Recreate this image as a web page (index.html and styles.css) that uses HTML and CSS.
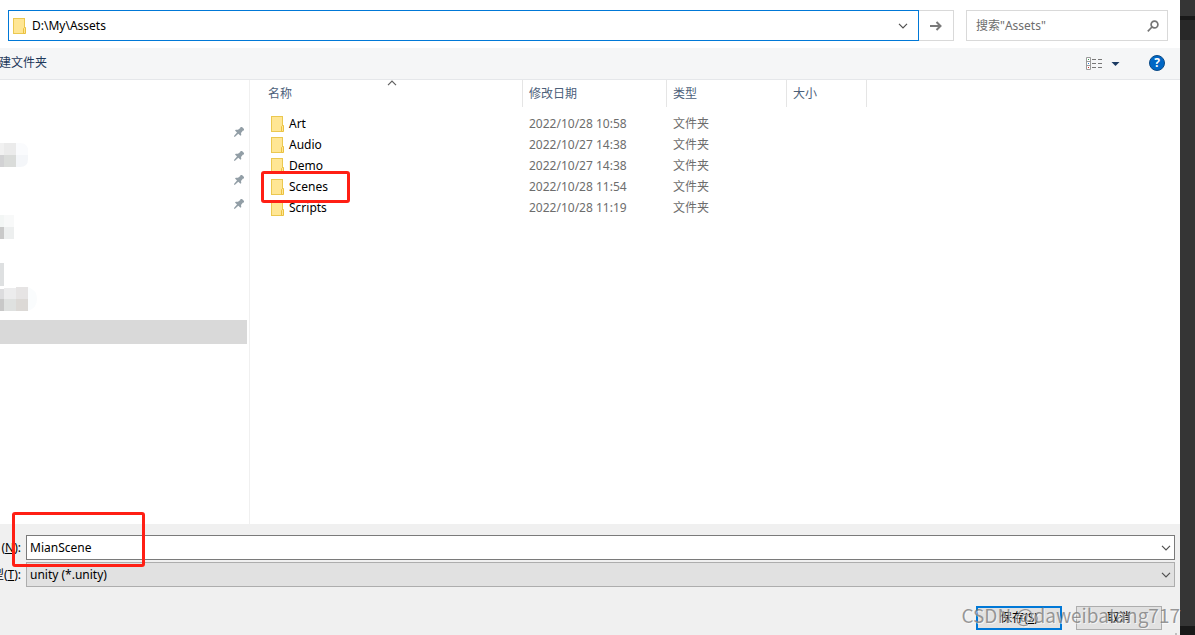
FILE: index.html
```html
<!DOCTYPE html>
<html lang="zh-CN">
<head>
<meta charset="utf-8">
<meta name="viewport" content="width=device-width, initial-scale=1">
<title>Assets</title>
<link rel="stylesheet" href="styles.css">
</head>
<body>
<svg class="defs" aria-hidden="true">
  <symbol id="folder" viewBox="0 0 13 16">
    <rect x="0.5" y="0.5" width="11" height="15" fill="#ffe694" stroke="#ebc850"/>
    <path d="M10.500 15.500v-5l1-1h1v6z" fill="#ffe694" stroke="#ebc13f"/>
  </symbol>
  <symbol id="pin" viewBox="0 0 10 10">
    <path d="M6.500 0h1.500l2 2v1.500H9L7 6l.3 2-.8.8L4.300 6.700 1 9.800H0V9l3-3.500L1 3.500 1.800 2.800H4L6.300 1z" fill="#929ea6"/>
  </symbol>
  <symbol id="chevron" viewBox="0 0 10 6">
    <path d="M1 .8l4 4 4-4" fill="none" stroke="#505050" stroke-width="1.200"/>
  </symbol>
</svg>
<div class="screen">
  <main class="dialog">
    <header class="address-bar">
      <div class="path">
        <svg class="folder"><use href="#folder"/></svg>
        <input class="path-input" type="text" value="D:\My\Assets" aria-label="地址">
        <button class="drop" type="button" aria-label="历史记录"><svg class="chevron"><use href="#chevron"/></svg></button>
      </div>
      <button class="go" type="button" aria-label="转到">
        <svg width="12" height="10" viewBox="0 0 12 10"><path d="M0 5h10.500M6.500 1l4 4-4 4" fill="none" stroke="#7a7a7a" stroke-width="2"/></svg>
      </button>
      <div class="search">
        <input class="search-input" type="text" placeholder='搜索"Assets"' aria-label="搜索">
        <svg width="12" height="12" viewBox="0 0 12 12"><circle cx="7.500" cy="4.500" r="3.400" fill="none" stroke="#757575" stroke-width="1.700"/><path d="M5 7L.8 11.300" stroke="#757575" stroke-width="1.700"/></svg>
      </div>
    </header>

    <div class="toolbar">
      <button class="new-folder" type="button">建文件夹</button>
      <div class="tools">
        <button class="view" type="button" aria-label="更改视图">
          <svg width="34" height="13" viewBox="0 0 34 13">
            <path d="M.5.5h4v12h-4zM.5 4.500h4M.5 8.500h4" fill="#fff" stroke="#9a9a9a"/>
            <path d="M2 2h1v1H2z" fill="#3a9a50"/><path d="M2 6h1v1H2z" fill="#2a7bd8"/><path d="M2 10h1v1H2z" fill="#d02a2a"/>
            <path d="M6 2.500h4M12 2.500h4M6 6.500h4M12 6.500h4M6 10.500h4M12 10.500h4" stroke="#777"/>
            <path d="M25.500 5h8l-4 4z" fill="#1b3a63"/>
          </svg>
        </button>
        <button class="help" type="button" aria-label="帮助">?</button>
      </div>
    </div>

    <div class="content">
      <nav class="sidebar" aria-label="导航">
        <ul class="places">
          <li class="place pinned"><svg class="pin"><use href="#pin"/></svg></li>
          <li class="place pinned">
            <svg class="mosaic" viewBox="0 0 40 24"><path d="M16 0h4q8 0 8 8v4H16z" fill="#fafbfd"/><path d="M16 12h12v4q0 8-8 8h-4z" fill="#f4f6f9"/><path d="M0 0h4v12H0z" fill="#f1f1f1"/><path d="M4 0h12v12H4z" fill="#ebebeb"/><path d="M0 12h4v12H0z" fill="#d2d2d4"/><path d="M4 12h12v12H4z" fill="#dadcda"/></svg>
            <svg class="pin"><use href="#pin"/></svg>
          </li>
          <li class="place pinned"><svg class="pin"><use href="#pin"/></svg></li>
          <li class="place pinned"><svg class="pin"><use href="#pin"/></svg></li>
          <li class="place"><svg class="mosaic" viewBox="0 0 40 24"><path d="M0 0h4v12H0z" fill="#f3f6f5"/><path d="M4 0h10v12H4z" fill="#f8f9f9"/><path d="M0 12h4v12H0z" fill="#c9c9c9"/><path d="M4 12h10v12H4z" fill="#edefef"/></svg></li>
          <li class="place"></li>
          <li class="place"><svg class="mosaic" viewBox="0 0 40 24"><path d="M0 0h4v23H0z" fill="#dee0e1"/></svg></li>
          <li class="place"><svg class="mosaic" viewBox="0 0 40 24"><path d="M28 0q9 3 9 12t-9 12z" fill="#fafcfd"/><path d="M0 2h4v10H0z" fill="#dcdcde"/><path d="M4 1h12v11H4z" fill="#ececed"/><path d="M16 0h12v12H16z" fill="#e6e4e4"/><path d="M0 12h4v12H0z" fill="#c8c8c8"/><path d="M4 12h12v12H4z" fill="#dfe1e0"/><path d="M16 12h12v12H16z" fill="#dcd9d6"/></svg></li>
          <li class="place selected"></li>
        </ul>
      </nav>

      <section class="files">
        <svg class="sort" viewBox="0 0 10 6"><path d="M1 5.200l4-4 4 4" fill="none" stroke="#606060" stroke-width="1.200"/></svg>
        <table class="file-table">
          <colgroup><col class="col-name"><col class="col-date"><col class="col-type"><col class="col-size"></colgroup>
          <thead>
            <tr><th scope="col">名称</th><th scope="col">修改日期</th><th scope="col">类型</th><th scope="col">大小</th></tr>
          </thead>
          <tbody>
            <tr><td><span class="file"><svg class="folder"><use href="#folder"/></svg>Art</span></td><td>2022/10/28 10:58</td><td>文件夹</td><td></td></tr>
            <tr><td><span class="file"><svg class="folder"><use href="#folder"/></svg>Audio</span></td><td>2022/10/27 14:38</td><td>文件夹</td><td></td></tr>
            <tr><td><span class="file"><svg class="folder"><use href="#folder"/></svg>Demo</span></td><td>2022/10/27 14:38</td><td>文件夹</td><td></td></tr>
            <tr><td><span class="file"><svg class="folder"><use href="#folder"/></svg>Scenes<i class="mark mark-file"></i></span></td><td>2022/10/28 11:54</td><td>文件夹</td><td></td></tr>
            <tr><td><span class="file"><svg class="folder"><use href="#folder"/></svg>Scripts</span></td><td>2022/10/28 11:19</td><td>文件夹</td><td></td></tr>
          </tbody>
        </table>
      </section>
    </div>

    <footer class="footer">
      <div class="field">
        <label class="field-label" for="filename">(<u>N</u>):</label>
        <div class="combo">
          <input class="combo-input" id="filename" type="text" value="MianScene">
          <button class="drop" type="button" aria-label="文件名列表"><svg class="chevron"><use href="#chevron"/></svg></button>
        </div>
        <i class="mark mark-name"></i>
      </div>
      <div class="field">
        <label class="field-label" for="filetype">型(<u>T</u>):</label>
        <div class="combo combo-type">
          <select class="combo-select" id="filetype"><option>unity (*.unity)</option></select>
          <svg class="chevron select-chevron"><use href="#chevron"/></svg>
        </div>
      </div>
      <div class="actions">
        <button class="btn btn-default" type="button">保存(<u>S</u>)</button>
        <button class="btn" type="button">取消</button>
      </div>
      <span class="watermark">CSDN @daweibatang717</span>
      <i class="grip"></i>
    </footer>
  </main>
  <aside class="backdrop">
    <div class="backdrop-line"></div>
    <div class="backdrop-tab"></div>
    <div class="backdrop-end"></div>
  </aside>
</div>
</body>
</html>
```
FILE: styles.css
```css
* { box-sizing: border-box; }

body {
  margin: 0;
  background: #fff;
  color: #000;
  font: 12px/16px "Noto Sans", "Noto Sans CJK SC", sans-serif;
}

button, input, select {
  margin: 0;
  padding: 0;
  border: 0;
  border-radius: 0;
  background: none;
  color: inherit;
  font: inherit;
}

input { min-width: 0; outline: 0; }
svg { display: block; flex: none; }
.defs { position: absolute; width: 0; height: 0; }

.screen { display: flex; min-height: 100vh; }
.dialog { display: flex; flex: 1; flex-direction: column; min-width: 0; }

.folder { width: 13px; height: 16px; }
.chevron { width: 10px; height: 6px; }
.drop { display: flex; align-items: center; justify-content: center; width: 18px; }

/* Address bar */
.address-bar { display: flex; height: 48px; padding: 10px 12px 7px 8px; }
.path {
  display: flex;
  flex: 1;
  align-items: center;
  gap: 6px;
  padding: 0 6px 0 4px;
  border: 1px solid #0078d7;
}
.path-input { flex: 1; }
.go {
  display: flex;
  align-items: center;
  justify-content: center;
  width: 35px;
  border: 1px solid #d9d9d9;
  border-left: 0;
}
.search {
  display: flex;
  align-items: center;
  width: 202px;
  margin-left: 12px;
  padding: 0 8px 0 9px;
  border: 1px solid #d9d9d9;
}
.search-input { flex: 1; }
.search-input::placeholder { color: #6d6d6d; opacity: 1; }

/* Toolbar */
.toolbar {
  display: flex;
  align-items: center;
  justify-content: space-between;
  height: 32px;
  padding: 0 15px 1px 0;
  border-bottom: 1px solid #e5e7ea;
  background: #f5f6f7;
}
.new-folder {
  display: flex;
  justify-content: flex-end;
  width: 47px;
  overflow: hidden;
  color: #1e395b;
  white-space: nowrap;
}
.tools { display: flex; align-items: center; gap: 29px; }
.help {
  width: 16px;
  height: 16px;
  border: 1px solid #0b4a86;
  border-radius: 50%;
  background: #0067c5;
  color: #fff;
  font-weight: 700;
  line-height: 14px;
}

/* Content */
.content { display: flex; flex: 1; }
.sidebar { width: 250px; border-right: 1px solid #f0f0f0; }
.places { margin: 0; padding: 39px 2px 0 0; list-style: none; }
.place { display: flex; align-items: center; height: 24px; }
.pinned { padding-right: 3px; }
.mosaic { width: 40px; height: 24px; }
.pin { width: 10px; height: 10px; margin-top: 2px; margin-left: auto; }
.selected { margin-top: 9px; background: #d9d9d9; }

.files { position: relative; flex: 1; min-width: 0; }
.sort { position: absolute; top: 0; left: 137px; width: 10px; height: 6px; }
.file-table { width: 617px; border-collapse: separate; border-spacing: 0; table-layout: fixed; }
.col-name { width: 273px; }
.col-date { width: 144px; }
.col-type { width: 120px; }
.col-size { width: 80px; }
.file-table th {
  height: 27px;
  padding: 0 6px;
  border-right: 1px solid #e5e5e5;
  color: #4c607a;
  font-weight: 400;
  text-align: left;
}
.file-table th:first-child { padding-left: 18px; }
.file-table tbody::before { content: ""; display: block; height: 6px; }
.file-table td { height: 21px; padding: 0 6px; color: #6d6d6d; }
.file-table td:first-child { padding-left: 21px; color: #000; }
.file { position: relative; display: flex; align-items: center; gap: 5px; }

/* Red highlight frames */
.mark { position: absolute; z-index: 1; border: 3px solid #ff1f14; border-radius: 3px; pointer-events: none; }
.mark-file { top: -8px; left: -10px; width: 89px; height: 32px; }
.mark-name { top: -23px; left: 12px; width: 133px; height: 55px; }

/* Footer */
.footer {
  position: relative;
  display: flex;
  flex-direction: column;
  gap: 2px;
  padding: 11px 5px 5px 0;
  background: #f0f0f0;
}
.field { position: relative; display: flex; align-items: center; gap: 5px; }
.field-label {
  display: flex;
  justify-content: flex-end;
  width: 21px;
  overflow: hidden;
  white-space: nowrap;
}
.combo {
  position: relative;
  display: flex;
  flex: 1;
  height: 25px;
  border: 1px solid #7a7a7a;
  background: #fff;
}
.combo-input { flex: 1; padding: 0 3px; }
.combo .drop { width: 16px; }
.combo-type { border-color: #adadad; background: #e1e1e1; }
.combo-select { flex: 1; padding: 0 3px; appearance: none; }
.select-chevron { position: absolute; top: 9px; right: 3px; pointer-events: none; }
.actions { display: flex; justify-content: flex-end; gap: 14px; padding: 17px 13px 0 0; }
.btn { width: 86px; height: 24px; border: 1px solid #adadad; background: #e1e1e1; }
.btn-default { border: 2px solid #0078d7; }
.watermark {
  position: absolute;
  right: 0;
  bottom: 8px;
  color: rgba(120, 120, 120, 0.75);
  font: 19px/24px "Noto Sans CJK SC", sans-serif;
  text-shadow: 1px 1px 0 rgba(255, 255, 255, 0.6);
  pointer-events: none;
}
.grip { position: absolute; right: 3px; bottom: 0; width: 2px; height: 2px; background: #bfbfbf; }

/* Window behind the dialog */
.backdrop { display: flex; flex-direction: column; width: 15px; padding-top: 16px; background: #353535; }
.backdrop-line { height: 4px; background: #191919; }
.backdrop-tab { height: 20px; background: #282828; }
.backdrop-end { height: 9px; margin-top: auto; background: #191919; }
```
